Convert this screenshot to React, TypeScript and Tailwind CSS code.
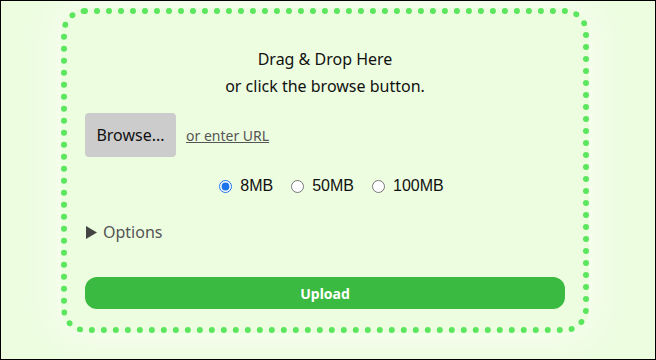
import { useState } from "react";

const sizes = ["8MB", "50MB", "100MB"];

export default function App() {
  const [size, setSize] = useState("8MB");

  return (
    <div className="w-[656px] h-[360px] border border-black bg-[#edfde0] overflow-hidden font-['Noto_Sans',sans-serif]">
      <div className="ml-[60px] mt-[7px] w-[528px] h-[325px] border-[6px] border-dotted border-[#5be65e] rounded-[24px] shadow-[0_0_30px_10px_rgba(255,255,255,0.5)] bg-[#edfde0] px-[18px] flex flex-col">
        <div className="mt-[32px] text-center text-[16px] leading-[27px] text-[#111]">
          <p>Drag &amp; Drop Here</p>
          <p>or click the browse button.</p>
        </div>

        <div className="mt-[13px] flex items-center">
          <button className="h-[44px] w-[91px] rounded-[4px] bg-[#cccccc] text-[16px] text-[#111]">
            Browse...
          </button>
          <a className="ml-[10px] text-[14px] text-[#555] underline cursor-pointer">
            or enter URL
          </a>
        </div>

        <div className="mt-[17px] pl-[13px] flex justify-center items-center gap-[18px] font-['Liberation_Sans',sans-serif] text-[16px] text-[#111]">
          {sizes.map((s) => (
            <label key={s} className="flex items-center gap-[8px]">
              <input
                type="radio"
                name="size"
                checked={size === s}
                onChange={() => setSize(s)}
                className="m-0 w-[13px] h-[13px] accent-[#1a73e8]"
              />
              {s}
            </label>
          ))}
        </div>

        <details className="mt-[22px] text-[16px] text-[#555]">
          <summary className="cursor-pointer list-none flex items-center gap-[6px] [&::-webkit-details-marker]:hidden">
            <svg width="11" height="13" viewBox="0 0 11 13" className="ml-px">
              <path d="M0 0 L11 6.5 L0 13 Z" fill="#444" />
            </svg>
            Options
          </summary>
        </details>

        <button className="mt-auto mb-[18px] h-[32px] w-full rounded-[12px] bg-[#3bba41] text-white text-[14px] font-bold">
          Upload
        </button>
      </div>
    </div>
  );
}
